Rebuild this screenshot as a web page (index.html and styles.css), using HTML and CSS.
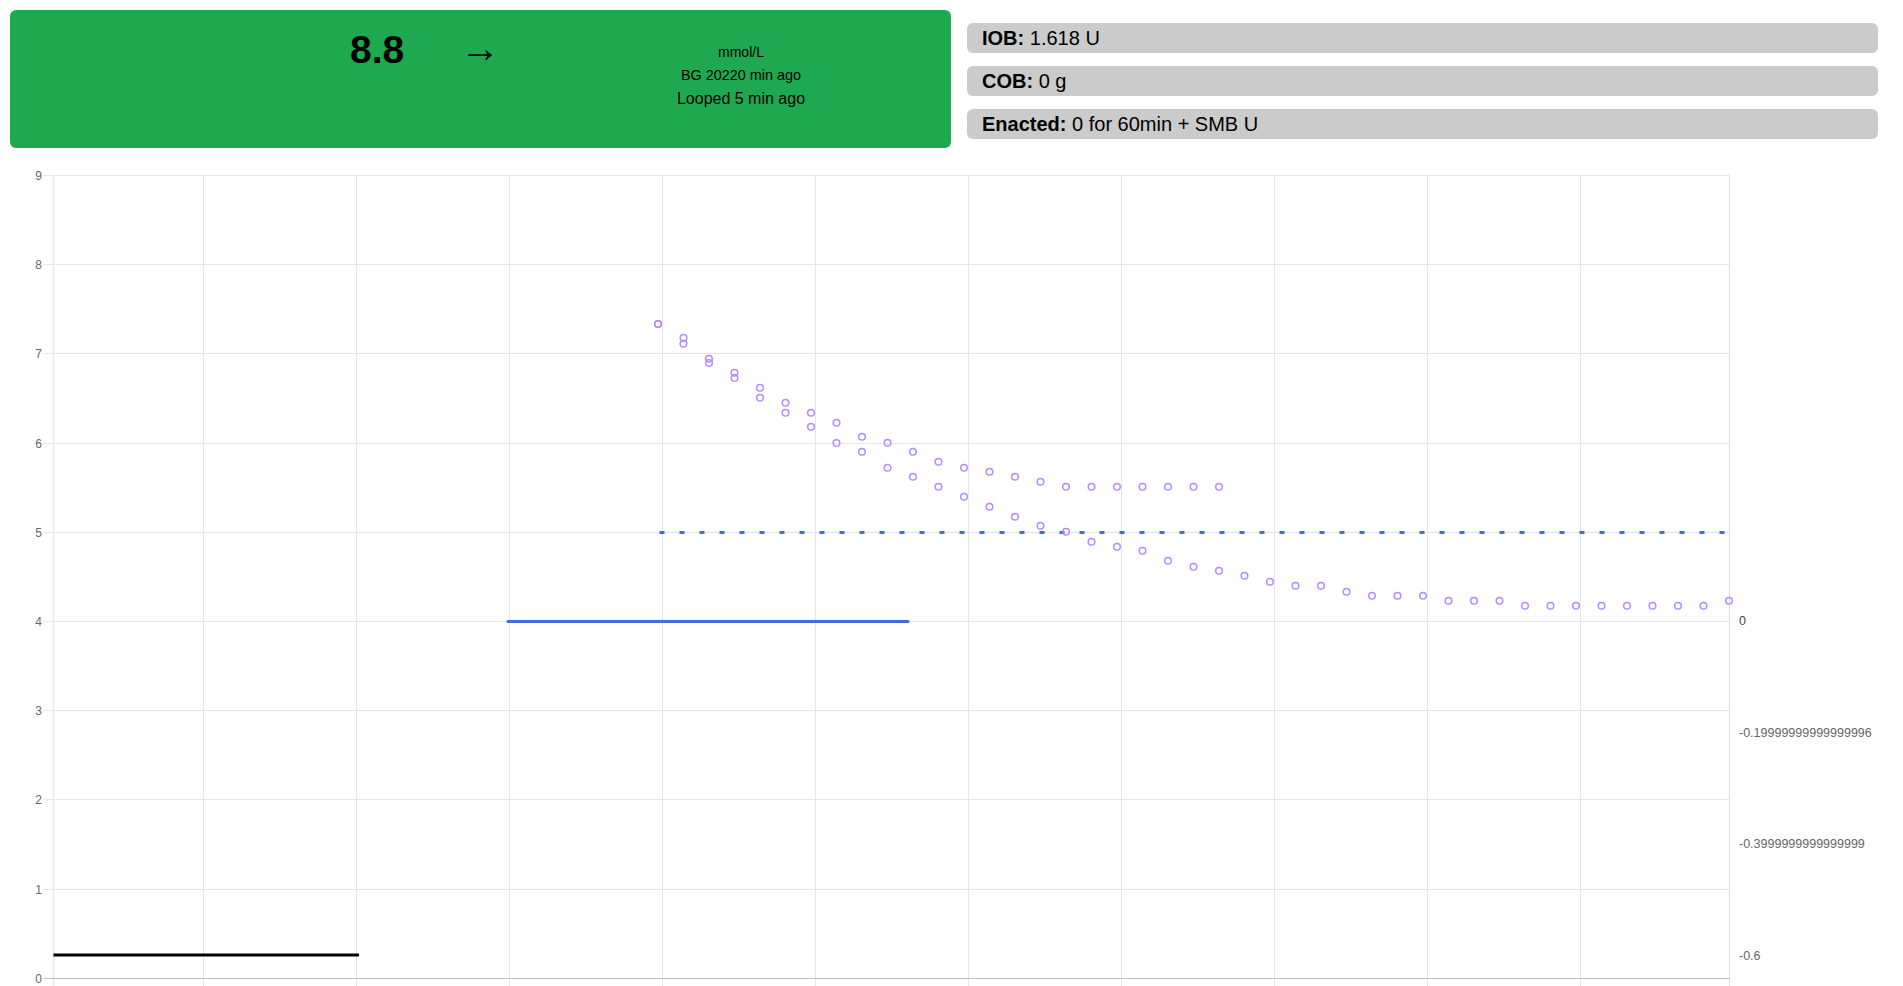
FILE: index.html
```html
<!DOCTYPE html>
<html lang="en">
<head>
<meta charset="utf-8">
<title>Loop status</title>
<link rel="stylesheet" href="styles.css">
</head>
<body>
<header class="header">
  <section class="bg-card">
    <div class="bg-value">8.8</div>
    <div class="bg-arrow">→</div>
    <div class="bg-meta">
      <div class="meta-unit">mmol/L</div>
      <div class="meta-bg">BG 20220 min ago</div>
      <div class="meta-loop">Looped 5 min ago</div>
    </div>
  </section>
  <section class="stats">
    <div class="stat"><b>IOB:</b> 1.618 U</div>
    <div class="stat"><b>COB:</b> 0 g</div>
    <div class="stat"><b>Enacted:</b> 0 for 60min + SMB U</div>
  </section>
</header>
<div class="chart">
<svg class="chart-svg" width="1903" height="826" viewBox="0 160 1903 826" xmlns="http://www.w3.org/2000/svg">
  <g class="grid-h" stroke="#e6e6e6" stroke-width="1">
    <line x1="43.5" y1="175.5" x2="1729.5" y2="175.5"/>
    <line x1="43.5" y1="264.5" x2="1729.5" y2="264.5"/>
    <line x1="43.5" y1="353.5" x2="1729.5" y2="353.5"/>
    <line x1="43.5" y1="443.5" x2="1729.5" y2="443.5"/>
    <line x1="43.5" y1="532.5" x2="1729.5" y2="532.5"/>
    <line x1="43.5" y1="621.5" x2="1729.5" y2="621.5"/>
    <line x1="43.5" y1="710.5" x2="1729.5" y2="710.5"/>
    <line x1="43.5" y1="799.5" x2="1729.5" y2="799.5"/>
    <line x1="43.5" y1="889.5" x2="1729.5" y2="889.5"/>
  </g>
  <g class="grid-v" stroke="#e6e6e6" stroke-width="1">
    <line x1="203.5" y1="175.5" x2="203.5" y2="990"/>
    <line x1="356.5" y1="175.5" x2="356.5" y2="990"/>
    <line x1="509.5" y1="175.5" x2="509.5" y2="990"/>
    <line x1="662.5" y1="175.5" x2="662.5" y2="990"/>
    <line x1="815.5" y1="175.5" x2="815.5" y2="990"/>
    <line x1="968.5" y1="175.5" x2="968.5" y2="990"/>
    <line x1="1121.5" y1="175.5" x2="1121.5" y2="990"/>
    <line x1="1274.5" y1="175.5" x2="1274.5" y2="990"/>
    <line x1="1427.5" y1="175.5" x2="1427.5" y2="990"/>
    <line x1="1580.5" y1="175.5" x2="1580.5" y2="990"/>
  </g>
  <line x1="53.5" y1="175.5" x2="53.5" y2="990" stroke="#ebebeb" stroke-width="2"/>
  <line x1="1729.5" y1="175.5" x2="1729.5" y2="990" stroke="#dedede" stroke-width="1"/>
  <line x1="43.5" y1="978.5" x2="1729.5" y2="978.5" stroke="#c0c0c0" stroke-width="1"/>

  <g class="axis-left" font-family="Liberation Sans, Arial, sans-serif" font-size="12" fill="#666" text-anchor="end">
    <text x="42" y="179.5">9</text>
    <text x="42" y="268.5">8</text>
    <text x="42" y="357.5">7</text>
    <text x="42" y="447.5">6</text>
    <text x="42" y="536.5">5</text>
    <text x="42" y="625.5">4</text>
    <text x="42" y="714.5">3</text>
    <text x="42" y="803.5">2</text>
    <text x="42" y="893.5">1</text>
    <text x="42" y="982.5">0</text>
  </g>
  <g class="axis-right" font-family="Liberation Sans, Arial, sans-serif" font-size="12.5" fill="#666">
    <text x="1739" y="625" fill="#444">0</text>
    <text x="1739" y="737">-0.19999999999999996</text>
    <text x="1739" y="848">-0.3999999999999999</text>
    <text x="1739" y="960">-0.6</text>
  </g>

  <line x1="53.5" y1="955" x2="359" y2="955" stroke="#000" stroke-width="3"/>
  <line x1="508" y1="621.5" x2="908" y2="621.5" stroke="#4169e1" stroke-width="3" stroke-linecap="round"/>
  <line x1="659.5" y1="532.5" x2="1729" y2="532.5" stroke="#4169e1" stroke-width="3" stroke-dasharray="5 15"/>

  <g class="points" fill="none" stroke="#b48cff" stroke-width="1.5">
    <circle cx="658" cy="324" r="3.3"/>
    <circle cx="683.5" cy="337.7" r="3.3"/>
    <circle cx="709" cy="358.7" r="3.3"/>
    <circle cx="734.5" cy="372.7" r="3.3"/>
    <circle cx="760" cy="387.7" r="3.3"/>
    <circle cx="785.5" cy="402.7" r="3.3"/>
    <circle cx="811" cy="412.7" r="3.3"/>
    <circle cx="836.5" cy="422.7" r="3.3"/>
    <circle cx="862" cy="436.7" r="3.3"/>
    <circle cx="887.5" cy="442.7" r="3.3"/>
    <circle cx="913" cy="451.7" r="3.3"/>
    <circle cx="938.5" cy="461.7" r="3.3"/>
    <circle cx="964" cy="467.7" r="3.3"/>
    <circle cx="989.5" cy="471.7" r="3.3"/>
    <circle cx="1015" cy="476.7" r="3.3"/>
    <circle cx="1040.5" cy="481.7" r="3.3"/>
    <circle cx="1066" cy="486.7" r="3.3"/>
    <circle cx="1091.5" cy="486.7" r="3.3"/>
    <circle cx="1117" cy="486.7" r="3.3"/>
    <circle cx="1142.5" cy="486.7" r="3.3"/>
    <circle cx="1168" cy="486.7" r="3.3"/>
    <circle cx="1193.5" cy="486.7" r="3.3"/>
    <circle cx="1219" cy="486.7" r="3.3"/>

    <circle cx="658" cy="324" r="3.3"/>
    <circle cx="683.5" cy="343.7" r="3.3"/>
    <circle cx="709" cy="363" r="3.3"/>
    <circle cx="734.5" cy="378" r="3.3"/>
    <circle cx="760" cy="397.7" r="3.3"/>
    <circle cx="785.5" cy="412.7" r="3.3"/>
    <circle cx="811" cy="426.7" r="3.3"/>
    <circle cx="836.5" cy="443" r="3.3"/>
    <circle cx="862" cy="451.7" r="3.3"/>
    <circle cx="887.5" cy="467.7" r="3.3"/>
    <circle cx="913" cy="476.7" r="3.3"/>
    <circle cx="938.5" cy="486.7" r="3.3"/>
    <circle cx="964" cy="496.7" r="3.3"/>
    <circle cx="989.5" cy="506.7" r="3.3"/>
    <circle cx="1015" cy="516.7" r="3.3"/>
    <circle cx="1040.5" cy="525.7" r="3.3"/>
    <circle cx="1066" cy="531.7" r="3.3"/>
    <circle cx="1091.5" cy="541.7" r="3.3"/>
    <circle cx="1117" cy="546.7" r="3.3"/>
    <circle cx="1142.5" cy="550.7" r="3.3"/>
    <circle cx="1168" cy="560.7" r="3.3"/>
    <circle cx="1193.5" cy="566.7" r="3.3"/>
    <circle cx="1219" cy="570.7" r="3.3"/>
    <circle cx="1244.5" cy="575.7" r="3.3"/>
    <circle cx="1270" cy="581.7" r="3.3"/>
    <circle cx="1295.5" cy="585.7" r="3.3"/>
    <circle cx="1321" cy="585.7" r="3.3"/>
    <circle cx="1346.5" cy="591.7" r="3.3"/>
    <circle cx="1372" cy="595.7" r="3.3"/>
    <circle cx="1397.5" cy="595.7" r="3.3"/>
    <circle cx="1423" cy="595.7" r="3.3"/>
    <circle cx="1448.5" cy="600.7" r="3.3"/>
    <circle cx="1474" cy="600.7" r="3.3"/>
    <circle cx="1499.5" cy="600.7" r="3.3"/>
    <circle cx="1525" cy="605.7" r="3.3"/>
    <circle cx="1550.5" cy="605.7" r="3.3"/>
    <circle cx="1576" cy="605.7" r="3.3"/>
    <circle cx="1601.5" cy="605.7" r="3.3"/>
    <circle cx="1627" cy="605.7" r="3.3"/>
    <circle cx="1652.5" cy="605.7" r="3.3"/>
    <circle cx="1678" cy="605.7" r="3.3"/>
    <circle cx="1703.5" cy="605.7" r="3.3"/>
    <circle cx="1729" cy="600.7" r="3.3"/>
  </g>
</svg>
</div>
</body>
</html>
```
FILE: styles.css
```css
html, body {
  margin: 0;
  padding: 0;
  background: #fff;
  overflow: hidden;
}

body {
  font-family: "Liberation Sans", Arial, sans-serif;
  color: #000;
  width: 1903px;
  height: 986px;
}

.header {
  display: flex;
  align-items: flex-start;
  height: 160px;
  padding: 10px 0 0 10px;
  box-sizing: border-box;
}

.bg-card {
  display: flex;
  align-items: flex-start;
  width: 941px;
  height: 138px;
  background: #1ea850;
  border-radius: 6px;
  flex: none;
}

.bg-value {
  width: 60px;
  margin: 18px 0 0 340px;
  font-size: 39px;
  font-weight: bold;
  line-height: 44px;
}

.bg-arrow {
  width: 40px;
  margin: 18px 0 0 50px;
  font-size: 40px;
  line-height: 40px;
  text-align: center;
}

.bg-meta {
  width: 140px;
  margin: 31px 0 0 171px;
  text-align: center;
}

.meta-unit {
  font-size: 14px;
  line-height: 23px;
}

.meta-bg {
  font-size: 14.4px;
  line-height: 23px;
}

.meta-loop {
  font-size: 16px;
  line-height: 24px;
}

.stats {
  display: flex;
  flex-direction: column;
  gap: 13px;
  width: 911px;
  margin: 13px 0 0 16px;
}

.stat {
  background: #cbcbcb;
  border-radius: 6px;
  padding: 4px 15px 3px;
  font-size: 20px;
  line-height: 23px;
}

.stat b {
  font-weight: bold;
}

.chart {
  height: 826px;
}

.chart-svg {
  display: block;
}
```
